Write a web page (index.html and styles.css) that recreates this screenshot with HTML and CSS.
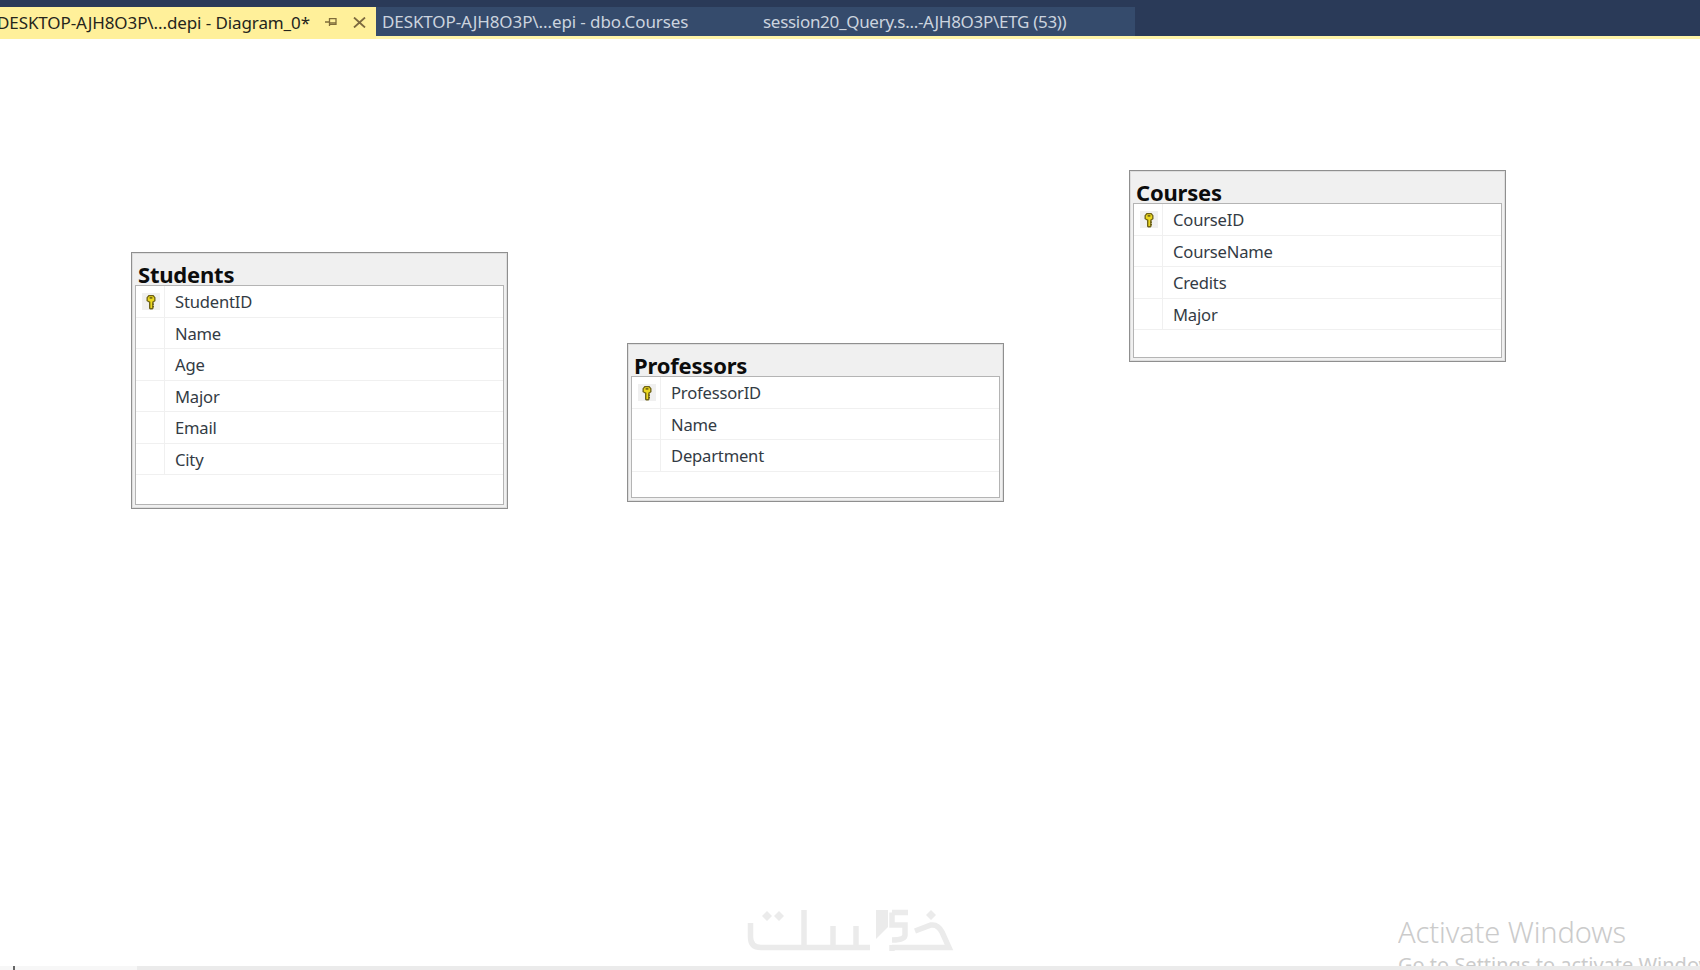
FILE: index.html
```html
<!DOCTYPE html>
<html lang="en">
<head>
<meta charset="utf-8">
<title>Diagram_0</title>
<link rel="stylesheet" href="styles.css">
</head>
<body>
<svg class="defs" width="0" height="0" aria-hidden="true">
  <symbol id="key" viewBox="0 0 12 16">
    <path d="M1.500 3.500 3.500 1h5l2 2.500v3.500L8.500 8.500v6L7.500 15.500H5L4 14.500V8.500L1.500 7z" fill="#6e6216"/>
    <path d="M2.800 3.800 4.200 2.300h3.600l1.400 1.500v2.700L7.200 7.800v6.200H5.400V7.800L2.800 6.500z" fill="#ecd820"/>
    <rect x="4.600" y="3.200" width="2.800" height="1.400" fill="#5c5214"/>
    <rect x="7" y="9.500" width="2" height="1.300" fill="#6e6216"/>
    <rect x="7" y="12" width="2" height="1.300" fill="#6e6216"/>
  </symbol>
</svg>
<header class="tabbar">
  <div class="tab tab-active">
    <span class="tab-title">DESKTOP-AJH8O3P\...depi - Diagram_0*</span>
    <svg class="pin" viewBox="0 0 12 10" width="12" height="10" aria-hidden="true"><path d="M0 5H4.500M4.500 1V9M4.500 1.700H11V7.300H4.500M4.500 5.800H11" fill="none" stroke="#7f6c3a" stroke-width="1.300"/></svg>
    <svg class="close" viewBox="0 0 13 11" width="13" height="11" aria-hidden="true"><path d="M1 0.500 12 10.500M12 0.500 1 10.500" fill="none" stroke="#7d6a3f" stroke-width="1.800"/></svg>
  </div>
  <div class="tab tab-courses">DESKTOP-AJH8O3P\...epi - dbo.Courses</div>
  <div class="tab tab-query">session20_Query.s...-AJH8O3P\ETG (53))</div>
</header>
<main class="canvas">
  <section class="table table-students">
    <h2 class="table-name">Students</h2>
    <div class="rows">
      <div class="row"><span class="gutter"><span class="key-bg"><svg class="key"><use href="#key"/></svg></span></span><span class="col">StudentID</span></div>
      <div class="row"><span class="gutter"></span><span class="col">Name</span></div>
      <div class="row"><span class="gutter"></span><span class="col">Age</span></div>
      <div class="row"><span class="gutter"></span><span class="col">Major</span></div>
      <div class="row"><span class="gutter"></span><span class="col">Email</span></div>
      <div class="row"><span class="gutter"></span><span class="col">City</span></div>
    </div>
  </section>
  <section class="table table-professors">
    <h2 class="table-name">Professors</h2>
    <div class="rows">
      <div class="row"><span class="gutter"><span class="key-bg"><svg class="key"><use href="#key"/></svg></span></span><span class="col">ProfessorID</span></div>
      <div class="row"><span class="gutter"></span><span class="col">Name</span></div>
      <div class="row"><span class="gutter"></span><span class="col">Department</span></div>
    </div>
  </section>
  <section class="table table-courses">
    <h2 class="table-name">Courses</h2>
    <div class="rows">
      <div class="row"><span class="gutter"><span class="key-bg"><svg class="key"><use href="#key"/></svg></span></span><span class="col">CourseID</span></div>
      <div class="row"><span class="gutter"></span><span class="col">CourseName</span></div>
      <div class="row"><span class="gutter"></span><span class="col">Credits</span></div>
      <div class="row"><span class="gutter"></span><span class="col">Major</span></div>
    </div>
  </section>
  <svg class="watermark" viewBox="0 0 210 50" width="210" height="50" role="img" aria-label="khamsat logo">
    <g fill="none" stroke="#ebebeb" stroke-width="5.500">
      <path d="M5.500 18V32Q5.500 42.500 16 42.500H125"/>
      <path d="M59 5V42"/>
      <path d="M88 21V42M111 21V42"/>
      <path d="M147 7.500H163M147 7.500V20H160V30Q160 35 147 35M147 40V46"/>
      <path d="M170 26 186 20Q193 19 197 27L204 42.500H147"/>
    </g>
    <g fill="#ebebeb">
      <path d="M131 5H143V22L131 34z"/>
      <path d="M17 11 22 6 27 11 22 16zM29 11 34 6 39 11 34 16zM181 10 186 5 191 10 186 15z"/>
    </g>
  </svg>
  <div class="activate">
    <p class="activate-title">Activate Windows</p>
    <p class="activate-sub">Go to Settings to activate Windows.</p>
  </div>
  <div class="hscroll"><span class="hscroll-mark"></span><span class="hscroll-track"></span></div>
</main>
</body>
</html>
```
FILE: styles.css
```css
* { box-sizing: border-box; }
html, body { margin: 0; height: 100%; }
body {
  width: 1700px;
  height: 970px;
  overflow: hidden;
  background: #fff;
  display: flex;
  flex-direction: column;
  font-family: "Open Sans", "Liberation Sans", sans-serif;
}
.defs { position: absolute; }
.tabbar {
  flex: none;
  height: 39px;
  padding-top: 7px;
  display: flex;
  align-items: stretch;
  background: #2a3a58;
  border-bottom: 3px solid #fff4a8;
}
.tab {
  height: 29px;
  display: flex;
  align-items: center;
  font-family: "Noto Sans", "Liberation Sans", sans-serif;
  font-size: 17px;
  letter-spacing: -0.1px;
  white-space: nowrap;
  color: #ccd4df;
  background: #354b6c;
}
.tab-active {
  width: 376px;
  height: 32px;
  padding-bottom: 2px;
  background: #fff09a;
  color: #25251c;
  padding-right: 10px;
  overflow: hidden;
}
.tab-title { margin-left: -3px; flex: 1; }
.pin { margin-right: 16px; }
.tab-courses { width: 380px; padding-left: 6px; }
.tab-query { width: 379px; padding-left: 7px; letter-spacing: -0.3px; }
.canvas { position: relative; flex: 1; }
.table {
  position: absolute;
  width: 377px;
  display: flex;
  flex-direction: column;
  background: #f0f0f0;
  border: 1px solid #8f8f8f;
  box-shadow: inset 0 0 0 1px #dedede;
  padding: 0 3px 3px;
}
.table-students { left: 131px; top: 213px; height: 257px; }
.table-professors { left: 627px; top: 304px; height: 159px; }
.table-courses { left: 1129px; top: 131px; height: 192px; }
.table-name {
  margin: 0;
  height: 32px;
  padding: 8px 0 0 3px;
  font-family: "Noto Sans", "Liberation Sans", sans-serif;
  font-size: 22px;
  line-height: 26px;
  font-weight: 700;
  letter-spacing: -0.2px;
  color: #0c0c0c;
  white-space: nowrap;
}
.rows {
  flex: 1;
  background: #fff;
  border: 1px solid #b4b4b4;
}
.row {
  height: 31.500px;
  display: flex;
  border-bottom: 1px solid #f0f0f0;
}
.gutter {
  flex: none;
  width: 29px;
  padding-left: 2px;
  display: flex;
  align-items: center;
  justify-content: center;
  border-right: 1px solid #f0f0f0;
}
.key-bg {
  width: 18px;
  height: 17px;
  margin-top: 1px;
  display: flex;
  align-items: center;
  justify-content: center;
  background: #f0f0f0;
}
.key { width: 12px; height: 16px; }
.col {
  padding-left: 10px;
  font-family: "Noto Sans", "Liberation Sans", sans-serif;
  font-size: 16.600px;
  line-height: 31px;
  letter-spacing: -0.2px;
  color: #333b44;
}
.watermark { position: absolute; left: 745px; top: 866px; }
.activate {
  position: absolute;
  left: 1398px;
  top: 874px;
  width: 302px;
  height: 57px;
  overflow: hidden;
  white-space: nowrap;
  color: #cbcbcb;
  font-family: "Noto Sans", "Liberation Sans", sans-serif;
}
.activate-title { margin: 0; font-size: 29px; line-height: 38px; font-weight: 300; letter-spacing: -0.1px; }
.activate-sub { margin: 0; font-size: 20px; line-height: 28px; }
.hscroll {
  position: absolute;
  left: 0;
  right: 0;
  bottom: 0;
  height: 4px;
  display: flex;
  background: #f7f7f7;
}
.hscroll-mark { width: 2px; margin-left: 13px; height: 4px; background: #666; }
.hscroll-track { margin-left: 122px; flex: 1; background: #ebebeb; }
```
